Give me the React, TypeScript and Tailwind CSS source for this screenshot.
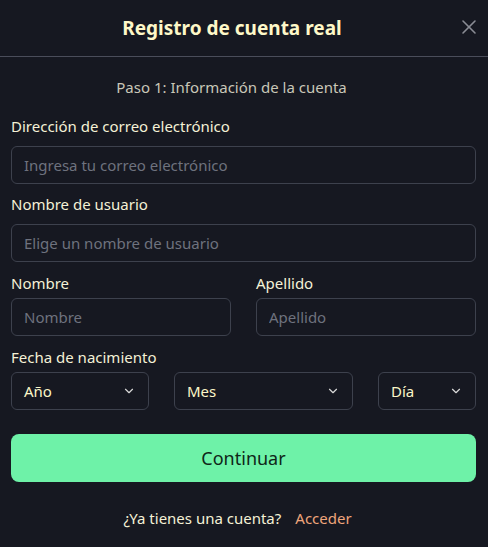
import React from 'react';
import { X, ChevronDown } from 'lucide-react';

const font = { fontFamily: '"Noto Sans", "Open Sans", sans-serif' };

const inputCls =
  'w-full h-[38px] rounded-[6px] border border-[#3d414d] bg-transparent px-[12px] text-[15px] text-[#f3f0d8] placeholder:text-[#6e727e] outline-none';

const Label: React.FC<{ children: React.ReactNode; className?: string }> = ({ children, className = '' }) => (
  <label className={`block h-[20px] text-[15px] leading-[20px] text-[#f4f1d6] ${className}`}>{children}</label>
);

const SelectBox: React.FC<{ label: string; className?: string }> = ({ label, className = '' }) => (
  <button
    type="button"
    className={`flex h-[38px] items-center justify-between rounded-[6px] border border-[#3d414d] pl-[12px] pr-[12px] text-[15px] text-[#fbf6c8] ${className}`}
  >
    <span>{label}</span>
    <ChevronDown className="h-[14px] w-[14px] text-[#d8d8d8]" strokeWidth={2} />
  </button>
);

export default function App() {
  return (
    <div className="min-h-screen w-full bg-[#161821]" style={font}>
      {/* Header */}
      <div className="relative flex h-[57px] items-center justify-center border-b border-[#4a4d5a] pr-[24px]">
        <h2 className="text-[19px] font-bold text-[#fef8c8]">Registro de cuenta real</h2>
        <button type="button" className="absolute right-[7px] top-[15px] text-[#8a8c94]" aria-label="Cerrar">
          <X className="h-[24px] w-[24px]" strokeWidth={1.6} />
        </button>
      </div>

      <div className="pl-[11px] pr-[12px]">
        <p className="mt-[20px] pr-[24px] text-center text-[15px] leading-[20px] text-[#c9c7b8]">
          Paso 1: Información de la cuenta
        </p>

        <Label className="mt-[19px]">Dirección de correo electrónico</Label>
        <input className={`${inputCls} mt-[10px]`} placeholder="Ingresa tu correo electrónico" />

        <Label className="mt-[10px]">Nombre de usuario</Label>
        <input className={`${inputCls} mt-[10px]`} placeholder="Elige un nombre de usuario" />

        <div className="mt-[11px] grid grid-cols-2 gap-x-[25px]">
          <div>
            <Label>Nombre</Label>
            <input className={`${inputCls} mt-[5px]`} placeholder="Nombre" />
          </div>
          <div>
            <Label>Apellido</Label>
            <input className={`${inputCls} mt-[5px]`} placeholder="Apellido" />
          </div>
        </div>

        <Label className="mt-[11px]">Fecha de nacimiento</Label>
        <div className="mt-[5px] flex gap-[25px]">
          <SelectBox label="Año" className="w-[138px]" />
          <SelectBox label="Mes" className="flex-1" />
          <SelectBox label="Día" className="w-[98px]" />
        </div>

        <button
          type="button"
          className="mt-[24px] h-[48px] w-full rounded-[8px] bg-[#6ef2a8] text-[18px] text-[#0f2618]"
        >
          Continuar
        </button>

        <p className="mt-[26px] pr-[12px] text-center text-[15px] leading-[20px] text-[#f4f1d6]">
          ¿Ya tienes una cuenta?
          <a href="#" className="ml-[14px] text-[#eea57c]">
            Acceder
          </a>
        </p>
      </div>
    </div>
  );
}
